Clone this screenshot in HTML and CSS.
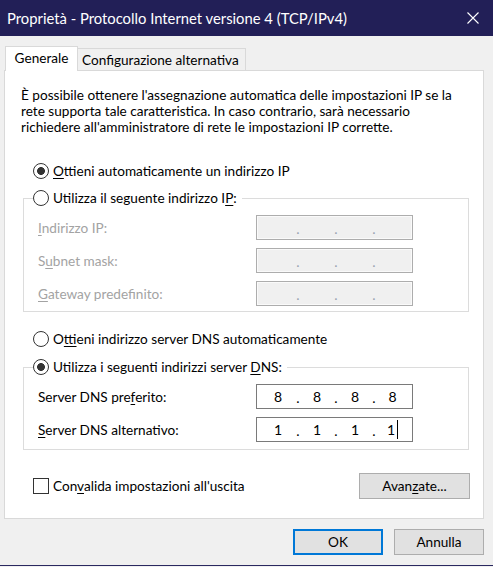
FILE: index.html
```html
<!DOCTYPE html>
<html lang="it">
<head>
<meta charset="utf-8">
<title>Proprietà - Protocollo Internet versione 4 (TCP/IPv4)</title>
<link rel="stylesheet" href="styles.css">
</head>
<body>
<div class="window">
  <header class="titlebar">
    <span class="title">Proprietà - Protocollo Internet versione 4 (TCP/IPv4)</span>
    <svg class="close" width="12" height="12" viewBox="0 0 12 12" aria-hidden="true"><path d="M0.5 0.5 L11.5 11.5 M11.5 0.5 L0.5 11.5" stroke="#ffffff" stroke-width="1.1" fill="none"/></svg>
  </header>
  <main class="content">
    <div class="tabs">
      <div class="tab tab-active">Generale</div>
      <div class="tab tab-inactive">Configurazione alternativa</div>
    </div>
    <section class="panel">
      <p class="intro">È possibile ottenere l'assegnazione automatica delle impostazioni IP se la<br>rete supporta tale caratteristica. In caso contrario, sarà necessario<br>richiedere all'amministratore di rete le impostazioni IP corrette.</p>

      <div class="option option-first"><span class="radio radio-on"></span><span><u>O</u>ttieni automaticamente un indirizzo IP</span></div>

      <fieldset class="group group-ip">
        <legend class="option legend"><span class="radio"></span><span>Utilizza il seguente indirizzo I<u>P</u>:</span></legend>
        <div class="row row-disabled">
          <span class="label"><u>I</u>ndirizzo IP:</span>
          <div class="ip ip-disabled"><span class="seg"></span><span class="dot">.</span><span class="seg"></span><span class="dot">.</span><span class="seg"></span><span class="dot">.</span><span class="seg"></span></div>
        </div>
        <div class="row row-disabled">
          <span class="label">S<u>u</u>bnet mask:</span>
          <div class="ip ip-disabled"><span class="seg"></span><span class="dot">.</span><span class="seg"></span><span class="dot">.</span><span class="seg"></span><span class="dot">.</span><span class="seg"></span></div>
        </div>
        <div class="row row-disabled">
          <span class="label"><u>G</u>ateway predefinito:</span>
          <div class="ip ip-disabled"><span class="seg"></span><span class="dot">.</span><span class="seg"></span><span class="dot">.</span><span class="seg"></span><span class="dot">.</span><span class="seg"></span></div>
        </div>
      </fieldset>

      <div class="option option-dns"><span class="radio"></span><span>O<u>t</u>tieni indirizzo server DNS automaticamente</span></div>

      <fieldset class="group group-dns">
        <legend class="option legend"><span class="radio radio-on"></span><span>Utilizza i seguenti indirizzi server <u>D</u>NS:</span></legend>
        <div class="row">
          <span class="label">Server DNS pre<u>f</u>erito:</span>
          <div class="ip"><span class="seg">8</span><span class="dot">.</span><span class="seg">8</span><span class="dot">.</span><span class="seg">8</span><span class="dot">.</span><span class="seg">8</span></div>
        </div>
        <div class="row">
          <span class="label"><u>S</u>erver DNS alternativo:</span>
          <div class="ip"><span class="seg">1</span><span class="dot">.</span><span class="seg">1</span><span class="dot">.</span><span class="seg">1</span><span class="dot">.</span><span class="seg">1<span class="caret"></span></span></div>
        </div>
      </fieldset>

      <div class="bottom-row">
        <div class="check-option"><span class="checkbox"></span><span>Con<u>v</u>alida impostazioni all'uscita</span></div>
        <button class="btn btn-advanced" type="button">Avan<u>z</u>ate...</button>
      </div>
    </section>
    <footer class="footer">
      <button class="btn btn-default" type="button">OK</button>
      <button class="btn" type="button">Annulla</button>
    </footer>
  </main>
</div>
</body>
</html>
```
FILE: styles.css
```css
* {
  box-sizing: border-box;
}

html,
body {
  margin: 0;
  padding: 0;
}

body {
  width: 493px;
  height: 567px;
  overflow: hidden;
  background: #f0f0f0;
  font-family: Lato, "Noto Sans", sans-serif;
  font-size: 13.6px;
  color: #000;
}

u {
  text-decoration-thickness: 1px;
  text-underline-offset: 2px;
}

.window {
  width: 493px;
  height: 566px;
  display: flex;
  flex-direction: column;
  background: #f0f0f0;
  border-bottom: 1px solid #2a2860;
}

.titlebar {
  height: 36px;
  flex: none;
  display: flex;
  align-items: center;
  justify-content: space-between;
  padding: 0 14px 0 7px;
  background: #221f57;
  color: #fff;
}

.title {
  font-size: 14.8px;
  white-space: nowrap;
}

.close {
  display: block;
}

.content {
  flex: 1;
  display: flex;
  flex-direction: column;
  padding: 10px 9px 0 4px;
}

.tabs {
  position: relative;
  z-index: 1;
  display: flex;
  align-items: flex-end;
  height: 25px;
  margin-bottom: -1px;
  padding-left: 1px;
}

.tab {
  display: flex;
  align-items: center;
  white-space: nowrap;
  border: 1px solid #d9d9d9;
  border-bottom: none;
}

.tab-active {
  width: 73px;
  height: 25px;
  justify-content: center;
  padding-bottom: 3px;
  background: #fff;
}

.tab-inactive {
  width: 168px;
  height: 22px;
  margin-bottom: 1px;
  padding: 1px 0 0 4px;
  border-left: none;
  background: #f0f0f0;
}

.panel {
  width: 480px;
  border: 1px solid #d9d9d9;
  background: #fff;
  padding: 16px 14px 19px 16px;
}

.intro {
  margin: 0;
  line-height: 16px;
  white-space: nowrap;
}

.option {
  display: flex;
  align-items: center;
  gap: 4px;
  height: 20px;
  white-space: nowrap;
}

.option-first {
  margin-top: 26px;
  padding-left: 12px;
}

.option-dns {
  margin-top: 17px;
  padding-left: 12px;
}

.radio {
  width: 16px;
  height: 16px;
  flex: none;
  border: 1px solid #333;
  border-radius: 50%;
  background: #fff;
}

.radio-on {
  background: radial-gradient(circle, #333 0 3.6px, #fff 4.2px);
}

.group {
  min-width: 0;
  width: 446px;
  margin: 7px 0 0 2px;
  padding: 7px 0 5px 14px;
  border: 1px solid #dcdcdc;
}

.group-dns {
  margin-top: 8px;
  padding-bottom: 7px;
}

.legend {
  margin-left: -5px;
  padding: 0 5px 0 0;
}

.row {
  display: flex;
  align-items: center;
  height: 25px;
}

.row + .row {
  margin-top: 8px;
}

.label {
  width: 218px;
  flex: none;
  white-space: nowrap;
}

.row-disabled .label {
  color: #a3a3a3;
}

.ip {
  width: 157px;
  height: 25px;
  display: grid;
  grid-template-columns: 36px 4px 34px 4px 34px 4px 33px;
  align-items: center;
  padding-left: 3px;
  border: 1px solid #7a7a7a;
  background: #fff;
  font-size: 14px;
}

.ip-disabled {
  border-color: #adadad;
  background: #f0f0f0;
  box-shadow: inset 0 0 0 1px #fafafa;
  color: #9aa3b2;
}

.seg {
  display: flex;
  justify-content: center;
  align-items: center;
}

.dot {
  text-align: center;
  line-height: 1;
  padding-top: 2px;
}

.caret {
  width: 1px;
  height: 19px;
  margin-left: 2px;
  background: #000;
}

.bottom-row {
  display: flex;
  align-items: center;
  justify-content: space-between;
  height: 26px;
  margin-top: 23px;
}

.check-option {
  display: flex;
  align-items: center;
  gap: 4px;
  padding-left: 12px;
  white-space: nowrap;
}

.checkbox {
  width: 16px;
  height: 16px;
  flex: none;
  border: 1px solid #333;
  background: #fff;
}

.btn {
  height: 26px;
  width: 90px;
  padding: 0;
  border: 1px solid #adadad;
  background: #e1e1e1;
  font-family: inherit;
  font-size: 13.6px;
  color: #000;
}

.btn-advanced {
  width: 111px;
  margin-right: -1px;
}

.btn-default {
  border: 2px solid #0078d7;
}

.footer {
  display: flex;
  justify-content: flex-end;
  gap: 11px;
  margin-top: 10px;
}
```
